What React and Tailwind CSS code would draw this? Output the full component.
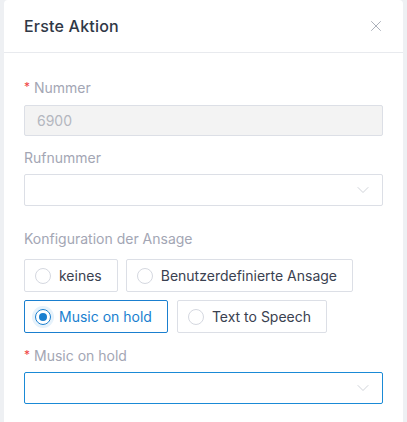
import { X, ChevronDown } from "lucide-react";

const font = { fontFamily: "Inter, 'Noto Sans', sans-serif" };

function Label({ children, required }) {
  return (
    <div className="flex items-center h-[22px] text-[14px] text-[#a3a6b4]">
      {required && <span className="text-[#f04545] mr-1 text-[12px]">*</span>}
      {children}
    </div>
  );
}

function Select({ active }) {
  return (
    <div
      className={`flex items-center justify-end h-[32px] rounded-[2px] border pr-[9px] ${
        active ? "border-[#1a8ad6]" : "border-[#dcdfe6]"
      }`}
    >
      <ChevronDown size={20} strokeWidth={0.9} className="text-[#c0c4cc]" />
    </div>
  );
}

function Radio({ label, checked }) {
  return (
    <div
      className={`flex items-center gap-2 h-[33px] pl-[10px] pr-[15px] rounded-[2px] border text-[14px] ${
        checked ? "border-[#1a7fcf] text-[#1a7fcf]" : "border-[#dcdfe6] text-[#3a4150]"
      }`}
    >
      {checked ? (
        <span className="w-[16px] h-[16px] rounded-full border border-[#1a7fcf] flex items-center justify-center shadow-[0_0_0_3px_#e6f2fb]">
          <span className="w-[8px] h-[8px] rounded-full bg-[#1a7fcf]" />
        </span>
      ) : (
        <span className="w-[16px] h-[16px] rounded-full border border-[#d5d8e0] bg-white" />
      )}
      {label}
    </div>
  );
}

export default function App() {
  return (
    <div className="w-[407px] h-[422px] bg-[#eef0f3] px-[4px]" style={font}>
      <div className="bg-white h-full rounded-t-[4px]">
        <div className="flex items-center justify-between h-[53px] pl-[20px] pr-[18px] border-b border-[#e8eaee]">
          <span className="text-[16px] font-medium text-[#303846] tracking-[0.2px]">Erste Aktion</span>
          <X size={18} strokeWidth={1.1} className="text-[#9aa0ad]" />
        </div>
        <div className="px-[20px] pt-[23px]">
          <Label required>Nummer</Label>
          <div className="mt-[7px] h-[31px] rounded-[2px] border border-[#dcdfe6] bg-[#f3f3f3] flex items-center px-3 text-[14px] text-[#b4b7bf]">
            6900
          </div>
          <div className="mt-[10px]">
            <Label>Rufnummer</Label>
          </div>
          <div className="mt-[6px]">
            <Select />
          </div>
          <div className="mt-[21px]">
            <Label>Konfiguration der Ansage</Label>
          </div>
          <div className="mt-[10px] flex gap-[8px]">
            <Radio label="keines" />
            <Radio label="Benutzerdefinierte Ansage" />
          </div>
          <div className="mt-[8px] flex gap-[9px]">
            <Radio label="Music on hold" checked />
            <Radio label="Text to Speech" />
          </div>
          <div className="mt-[11px]">
            <Label required>Music on hold</Label>
          </div>
          <div className="mt-[6px]">
            <Select active />
          </div>
        </div>
      </div>
    </div>
  );
}
